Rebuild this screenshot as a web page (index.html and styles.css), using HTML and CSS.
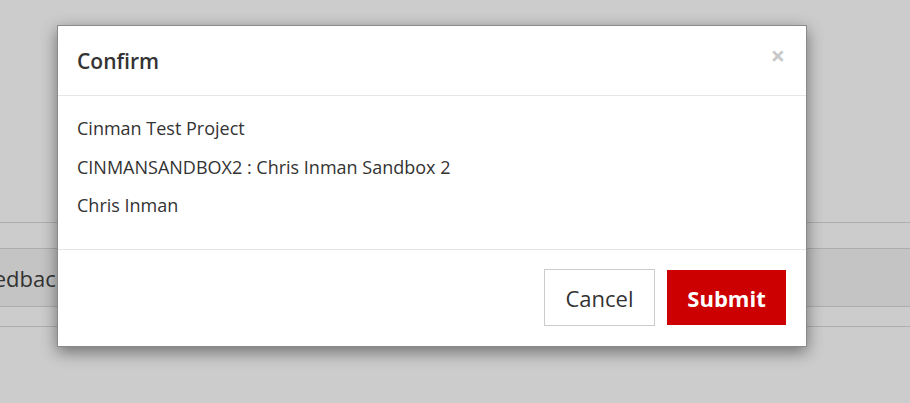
FILE: index.html
```html
<!DOCTYPE html>
<html>
<head>
<meta charset="utf-8">
<link rel="stylesheet" href="styles.css">
</head>
<body>
<div class="page">
  <div class="spacer"></div>
  <div class="row row-thin"></div>
  <div class="row row-main"><span class="row-label">Feedback</span></div>
  <div class="row row-thin2"></div>
</div>
<div class="modal">
  <div class="modal-header">
    <h4 class="modal-title">Confirm</h4>
    <span class="close">&times;</span>
  </div>
  <div class="modal-body">
    <p>Cinman Test Project</p>
    <p>CINMANSANDBOX2 : Chris Inman Sandbox 2</p>
    <p>Chris Inman</p>
  </div>
  <div class="modal-footer">
    <button class="btn btn-cancel">Cancel</button>
    <button class="btn btn-submit">Submit</button>
  </div>
</div>
</body>
</html>
```

FILE: styles.css
```css
html, body {
  margin: 0;
  padding: 0;
  width: 910px;
  height: 403px;
  overflow: hidden;
  background: #cccccc;
  font-family: "Open Sans", "Noto Sans", sans-serif;
  color: #333;
}
.page {
  display: flex;
  flex-direction: column;
}
.spacer { height: 222px; }
.row { border-top: 1px solid #adadad; }
.row-thin { height: 25px; }
.row-main {
  height: 57px;
  background: #c4c4c4;
  display: flex;
  align-items: center;
}
.row-label {
  font-size: 22px;
  margin-left: -30px;
  color: #333;
}
.row-thin2 { height: 19px; border-bottom: 1px solid #adadad; }

.modal {
  position: absolute;
  left: 57px;
  top: 25px;
  width: 748px;
  background: #fff;
  border: 1px solid #8a8a8a;
  box-shadow: 0 5px 15px rgba(0,0,0,.45);
}
.modal-header {
  height: 69px;
  padding: 0 20px 0 19px;
  border-bottom: 1px solid #e5e5e5;
  display: flex;
  align-items: center;
  justify-content: space-between;
}
.modal-title {
  margin: 0;
  font-size: 21px;
  font-weight: 600;
  color: #333;
}
.close {
  font-size: 25px;
  font-weight: 700;
  color: #c8c8c8;
  line-height: 1;
  margin-right: 1px;
  position: relative;
  top: -5px;
}
.modal-body {
  padding: 13px 20px 24px 19px;
  border-bottom: 1px solid #e5e5e5;
}
.modal-body p {
  margin: 0;
  font-size: 18px;
  line-height: 38.5px;
}
.modal-footer {
  height: 96px;
  padding: 0 20px;
  display: flex;
  align-items: center;
  justify-content: flex-end;
  gap: 12px;
}
.btn {
  font-family: "Open Sans", "Noto Sans", sans-serif;
  font-size: 22px;
  cursor: pointer;
}
.btn-cancel {
  width: 111px;
  height: 57px;
  background: #fff;
  border: 1px solid #ccc;
  color: #333;
}
.btn-submit {
  width: 119px;
  height: 55px;
  background: #cc0000;
  border: none;
  color: #fff;
  font-weight: 700;
}
```
